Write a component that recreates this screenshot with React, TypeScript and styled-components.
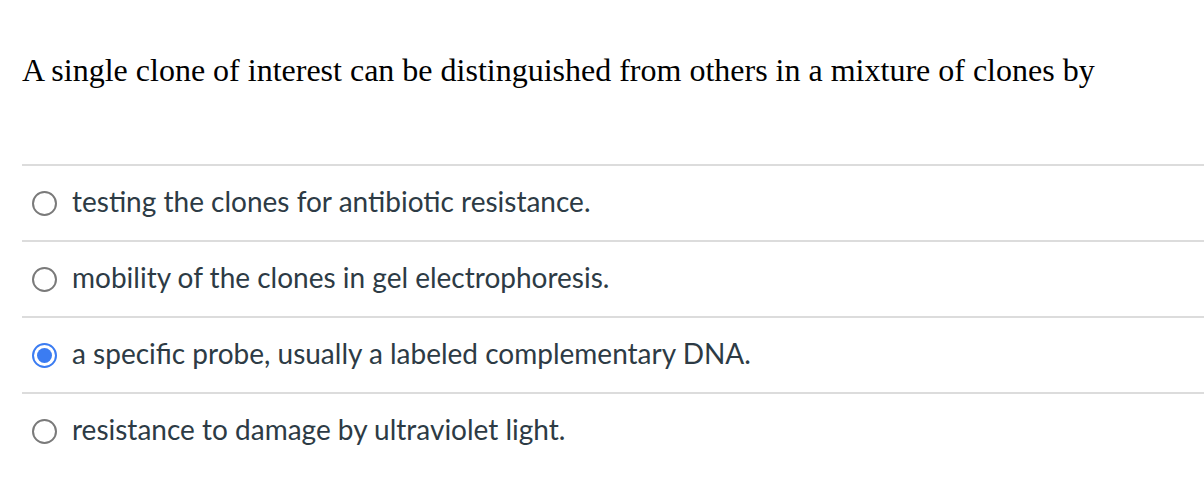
import React from "react";
import styled, { createGlobalStyle } from "styled-components";

const Global = createGlobalStyle`
  html, body { margin: 0; padding: 0; background: #fff; }
`;

const Page = styled.div`
  padding: 0 0 0 22px;
`;

const Question = styled.div`
  font-family: "Liberation Serif", "Times New Roman", serif;
  font-size: 32px;
  line-height: 40px;
  color: #000;
  padding-top: 50px;
  height: 164px;
  box-sizing: border-box;
`;

const List = styled.div`
  display: flex;
  flex-direction: column;
`;

const Row = styled.label`
  display: flex;
  align-items: center;
  gap: 15px;
  height: 76px;
  box-sizing: border-box;
  border-top: 2px solid #dcdcdc;
  font-family: Lato, "Open Sans", sans-serif;
  font-size: 28px;
  color: #2d3b45;
  padding-left: 10px;
`;

const OptionText = styled.span`
  padding-bottom: 5px;
`;

const Radio = styled.span<{ $checked?: boolean }>`
  width: 25px;
  height: 25px;
  box-sizing: border-box;
  border-radius: 50%;
  border: 2px solid ${(p) => (p.$checked ? "#3b7cf2" : "#7a7a7a")};
  display: flex;
  align-items: center;
  justify-content: center;
  flex: none;
  &::after {
    content: "";
    display: ${(p) => (p.$checked ? "block" : "none")};
    width: 15px;
    height: 15px;
    border-radius: 50%;
    background: #3b7cf2;
  }
`;

const options = [
  { text: "testing the clones for antibiotic resistance.", checked: false },
  { text: "mobility of the clones in gel electrophoresis.", checked: false },
  { text: "a specific probe, usually a labeled complementary DNA.", checked: true },
  { text: "resistance to damage by ultraviolet light.", checked: false },
];

export default function App() {
  return (
    <Page>
      <Global />
      <Question>
        A single clone of interest can be distinguished from others in a mixture of clones by
      </Question>
      <List>
        {options.map((o) => (
          <Row key={o.text}>
            <Radio $checked={o.checked} />
            <OptionText>{o.text}</OptionText>
          </Row>
        ))}
      </List>
    </Page>
  );
}
